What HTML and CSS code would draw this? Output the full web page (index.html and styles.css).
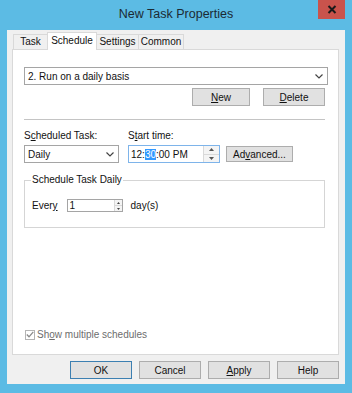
FILE: index.html
```html
<!DOCTYPE html>
<html>
    <head>
        <meta http-equiv="Content-Type" content="text/html; charset=UTF-8">
        <title>New Task Properties</title>
        <link rel="stylesheet" href="styles.css">
    </head>
    <body>
        <div class="window">
            <div class="titlebar">
                <span></span>
                <span class="title">New Task Properties</span>
                <span class="close">
                    <svg width="10" height="9" viewBox="0 0 10 9"><path d="M1.5 1 L8.5 8 M8.5 1 L1.5 8" stroke="#1a1a1a" stroke-width="2"/></svg>
                </span>
            </div>
            <div class="client">
                <div class="tabs">
                    <span class="tab tab-task">Task</span>
                    <span class="tab tab-schedule active">Schedule</span>
                    <span class="tab tab-settings">Settings</span>
                    <span class="tab tab-common">Common</span>
                </div>
                <div class="panel">
                    <div class="combo combo-wide">
                        <span>2. Run on a daily basis</span>
                        <svg class="arrow" width="8" height="5" viewBox="0 0 8 5"><path d="M0.5 0.5 L4 4 L7.5 0.5" fill="none" stroke="#444" stroke-width="1.2"/></svg>
                    </div>
                    <div class="btn-row">
                        <span class="btn btn-new"><u>N</u>ew</span>
                        <span class="btn btn-delete"><u>D</u>elete</span>
                    </div>
                    <div class="sep"></div>
                    <div class="fields">
                        <div class="field field-task">
                            <span class="lbl">S<u>c</u>heduled Task:</span>
                            <div class="combo">
                                <span>Daily</span>
                                <svg class="arrow" width="8" height="5" viewBox="0 0 8 5"><path d="M0.5 0.5 L4 4 L7.5 0.5" fill="none" stroke="#444" stroke-width="1.2"/></svg>
                            </div>
                        </div>
                        <div class="field">
                            <span class="lbl">S<u>t</u>art time:</span>
                            <div class="time-row">
                                <div class="spin spin-time">
                                    <span class="spin-text">12:<span class="hl">30</span>:00 PM</span>
                                    <span class="spin-btns">
                                        <span class="spin-up"><svg width="5" height="3" viewBox="0 0 5 3"><path d="M0 3 L2.5 0 L5 3 Z" fill="#555"/></svg></span>
                                        <span class="spin-down"><svg width="5" height="3" viewBox="0 0 5 3"><path d="M0 0 L2.5 3 L5 0 Z" fill="#555"/></svg></span>
                                    </span>
                                </div>
                                <span class="btn btn-adv">Ad<u>v</u>anced...</span>
                            </div>
                        </div>
                    </div>
                    <fieldset class="group">
                        <legend>Schedule Task Daily</legend>
                        <div class="every-row">
                            <span>Ever<u>y</u></span>
                            <div class="spin spin-every">
                                <span class="spin-text">1</span>
                                <span class="spin-btns">
                                    <span class="spin-up"><svg width="3" height="2" viewBox="0 0 3 2"><path d="M0 2 L1.5 0 L3 2 Z" fill="#444"/></svg></span>
                                    <span class="spin-down"><svg width="3" height="2" viewBox="0 0 3 2"><path d="M0 0 L1.5 2 L3 0 Z" fill="#444"/></svg></span>
                                </span>
                            </div>
                            <span>day(s)</span>
                        </div>
                    </fieldset>
                    <div class="check">
                        <span class="box">
                            <svg width="8" height="7" viewBox="0 0 8 7"><path d="M0.8 3.5 L3 5.8 L7.3 0.8" fill="none" stroke="#8a8a8a" stroke-width="1.3"/></svg>
                        </span>
                        <span>Sh<u>o</u>w multiple schedules</span>
                    </div>
                </div>
                <div class="footer">
                    <span class="btn btn-foot btn-default">OK</span>
                    <span class="btn btn-foot">Cancel</span>
                    <span class="btn btn-foot"><u>A</u>pply</span>
                    <span class="btn btn-foot">Help</span>
                </div>
            </div>
        </div>
    </body>
</html>
```

FILE: styles.css
```css
* {
    box-sizing: border-box;
}
body {
    margin: 0;
    font-family: "Liberation Sans", Arial, sans-serif;
    font-size: 10px;
    color: #111;
}
.window {
    width: 352px;
    height: 393px;
    background-color: #5cbbe4;
    display: flex;
    flex-direction: column;
}
.titlebar {
    height: 30px;
    display: grid;
    grid-template-columns: 1fr auto 1fr;
    align-items: start;
}
.title {
    font-size: 12.5px;
    color: #1b2a33;
    padding-top: 7px;
}
.close {
    justify-self: end;
    margin-right: 7px;
    width: 27px;
    height: 19px;
    background-color: #c9534c;
    display: flex;
    align-items: center;
    justify-content: center;
}
.client {
    flex: 1;
    margin: 0 7px 9px 7px;
    background-color: #f0f0f0;
    padding: 2px 6px 5px 5px;
    display: flex;
    flex-direction: column;
}
.tabs {
    display: flex;
    align-items: flex-end;
    margin-left: 2px;
    height: 17px;
}
.tab {
    height: 15px;
    border: 1px solid #d9d9d9;
    border-bottom: none;
    background-color: #f0f0f0;
    line-height: 14px;
    margin-left: -1px;
    text-align: center;
}
.tab-task {
    width: 35px;
}
.tab-schedule {
    width: 50px;
}
.tab-settings {
    width: 43px;
}
.tab-common {
    width: 46px;
}
.tab.active {
    height: 18px;
    background-color: #fff;
    margin-bottom: -1px;
    position: relative;
    z-index: 1;
    line-height: 15px;
}
.panel {
    flex: 1;
    background-color: #fff;
    border: 1px solid #d9d9d9;
    padding: 17px 13px 14px 11px;
    display: flex;
    flex-direction: column;
}
.combo {
    height: 18px;
    border: 1px solid #a5a5a5;
    background-color: #fff;
    display: flex;
    align-items: center;
    justify-content: space-between;
    padding: 0 4px 0 3px;
}
.combo-wide {
    margin-right: -3px;
}
.btn-row {
    display: flex;
    justify-content: flex-end;
    gap: 13px;
    margin-top: 3px;
}
.btn {
    height: 18px;
    background-color: #e1e1e1;
    border: 1px solid #adadad;
    display: flex;
    align-items: center;
    justify-content: center;
}
.btn-new {
    width: 58px;
}
.btn-delete {
    width: 62px;
}
.sep {
    height: 1px;
    background-color: #c4c4c4;
    margin-top: 13px;
}
.fields {
    display: flex;
    gap: 9px;
    margin-top: 9px;
}
.field {
    display: flex;
    flex-direction: column;
    gap: 2px;
}
.field-task {
    width: 95px;
}
.lbl {
    line-height: 14px;
}
.time-row {
    display: flex;
    align-items: center;
    gap: 6px;
}
.spin {
    display: flex;
    border: 1px solid #a5a5a5;
    background-color: #fff;
}
.spin-time {
    width: 92px;
    height: 18px;
    border-color: #7eb4ea;
}
.spin-text {
    flex: 1;
    display: flex;
    align-items: center;
    padding-left: 2px;
}
.hl {
    background-color: #3399ff;
    color: #fff;
}
.spin-btns {
    display: flex;
    flex-direction: column;
    width: 16px;
    border-left: 1px solid #d9d9d9;
}
.spin-up,
.spin-down {
    flex: 1;
    display: flex;
    align-items: center;
    justify-content: center;
    background-color: #f4f4f4;
}
.spin-up {
    border-bottom: 1px solid #d9d9d9;
}
.btn-adv {
    width: 67px;
    height: 16px;
}
.group {
    margin: 10px 0 0 0;
    border: 1px solid #d5d5d5;
    padding: 12px 7px 15px 7px;
}
.group legend {
    padding: 0 1px;
    margin-left: -1px;
    line-height: 14px;
}
.every-row {
    display: flex;
    align-items: center;
    gap: 8px;
}
.spin-every {
    width: 56px;
    height: 13px;
    margin-left: 1px;
}
.spin-every .spin-btns {
    width: 8px;
}
.check {
    margin-top: auto;
    display: flex;
    align-items: center;
    gap: 2px;
    color: #6d6d6d;
    margin-left: 1px;
}
.box {
    width: 10px;
    height: 10px;
    border: 1px solid #b4b4b4;
    display: flex;
    align-items: center;
    justify-content: center;
}
.footer {
    display: flex;
    justify-content: flex-end;
    gap: 7px;
    margin-top: 6px;
    margin-right: -6px;
    padding-right: 6px;
}
.btn-foot {
    width: 62px;
}
.btn-default {
    border-color: #3c7fb1;
}
```
